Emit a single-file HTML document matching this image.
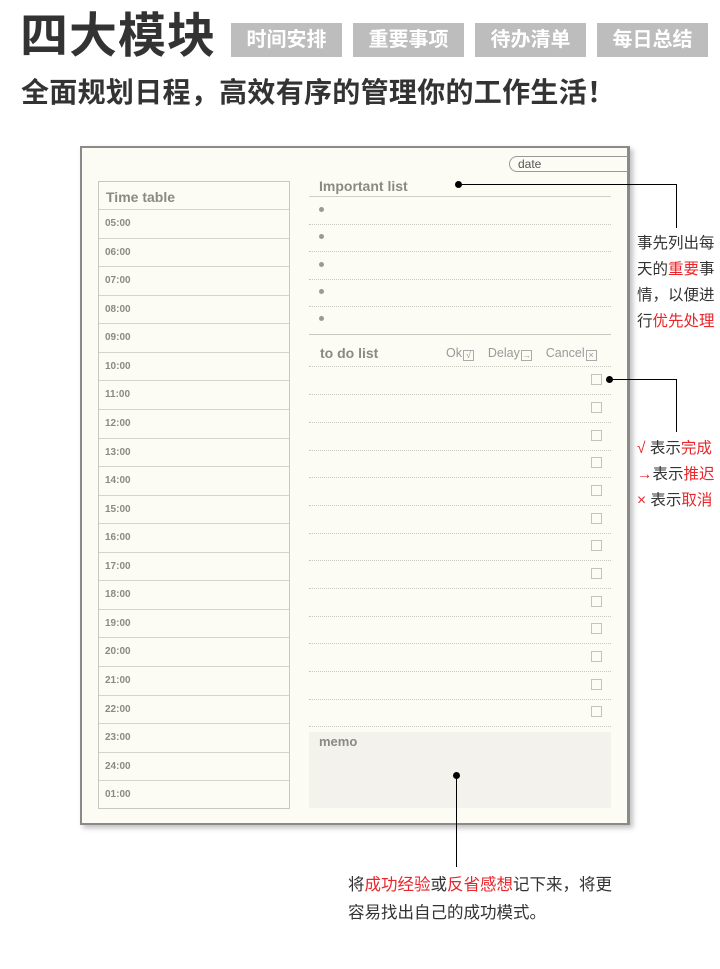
<!DOCTYPE html>
<html><head><meta charset="utf-8"><style>
*{margin:0;padding:0;box-sizing:border-box}
body{width:720px;height:969px;background:#fff;position:relative;overflow:hidden;font-family:"Liberation Sans","Noto Sans CJK SC",sans-serif}
.a{position:absolute}
.tag{position:absolute;top:23px;height:34px;width:111px;background:#bdbdbd;color:#fff;font-weight:bold;font-size:20px;line-height:34px;text-align:center}
.card{left:80px;top:146px;width:550px;height:679px;background:#fcfcf5;border:2px solid #8a8a8a;border-right:3px solid #8a8a8a;box-shadow:3px 3px 5px rgba(0,0,0,.25)}
.tt{left:98px;top:181px;width:192px;height:628px;border:1px solid #c8c8c0}
.row{height:28.57px;border-top:1px solid #d4d4cc;font-size:10px;color:#8a8a80;font-weight:bold;padding-left:6px;line-height:28px}
.g{color:#8a8a82;font-weight:bold}
.dl{position:absolute;left:309px;width:302px;border-top:1px dotted #c8c8c0}
.bul{position:absolute;left:319px;width:5px;height:5px;border-radius:50%;background:#999}
.cb{position:absolute;left:591px;width:11px;height:11px;border:1px solid #c4c4bc;background:#fcfcf5}
.ln{position:absolute;background:#000}
.dot{position:absolute;width:7px;height:7px;border-radius:50%;background:#000}
.ann{position:absolute;font-size:15.5px;color:#333;line-height:26px}
.r{color:#e8262b}
.bx{display:inline-block;width:11px;height:11px;border:1px solid #aaa;font-size:9px;line-height:9px;text-align:center;vertical-align:-1px;margin-left:1px}
</style></head><body>
<div class="a" style="left:20px;top:6px;font-size:48px;font-weight:bold;color:#333;line-height:62px;letter-spacing:1px">四大模块</div>
<div class="tag" style="left:231px">时间安排</div>
<div class="tag" style="left:353px">重要事项</div>
<div class="tag" style="left:475px">待办清单</div>
<div class="tag" style="left:597px">每日总结</div>
<div class="a" style="left:21px;top:75px;font-size:28px;font-weight:bold;color:#333;line-height:36px;letter-spacing:0.3px">全面规划日程，高效有序的管理你的工作生活！</div>

<div class="a card"></div>
<div class="a" style="left:509px;top:156px;width:119px;height:16px;border:1px solid #999;border-right:none;border-radius:8px 0 0 8px;font-size:12px;color:#555;padding-left:8px;line-height:14px">date</div>

<div class="a tt">
<div class="g" style="height:27px;font-size:14px;padding-left:7px;line-height:30px">Time table</div>
<div class="row">05:00</div><div class="row">06:00</div><div class="row">07:00</div><div class="row">08:00</div><div class="row">09:00</div><div class="row">10:00</div><div class="row">11:00</div><div class="row">12:00</div><div class="row">13:00</div><div class="row">14:00</div><div class="row">15:00</div><div class="row">16:00</div><div class="row">17:00</div><div class="row">18:00</div><div class="row">19:00</div><div class="row">20:00</div><div class="row">21:00</div><div class="row">22:00</div><div class="row">23:00</div><div class="row">24:00</div><div class="row">01:00</div>
</div>

<div class="a g" style="left:319px;top:178px;font-size:14px">Important list</div>
<div class="dl" style="top:196px;border-top:1px solid #d0d0c8"></div>
<div class="bul" style="top:207px"></div><div class="dl" style="top:224px"></div>
<div class="bul" style="top:234px"></div><div class="dl" style="top:251px"></div>
<div class="bul" style="top:262px"></div><div class="dl" style="top:279px"></div>
<div class="bul" style="top:289px"></div><div class="dl" style="top:306px"></div>
<div class="bul" style="top:316px"></div>
<div class="dl" style="top:334px;border-top:1px solid #c8c8c0"></div>
<div class="a g" style="left:320px;top:345px;font-size:14px">to do list</div>
<div class="a" style="left:446px;top:346px;font-size:12.5px;color:#999;white-space:nowrap">Ok<span class="bx">√</span>&nbsp;&nbsp;&nbsp;&nbsp;Delay<span class="bx">→</span>&nbsp;&nbsp;&nbsp;&nbsp;Cancel<span class="bx">×</span></div>
<div class="dl" style="top:366px"></div>
<div class="cb" style="top:374px"></div><div class="dl" style="top:394px"></div>
<div class="cb" style="top:402px"></div><div class="dl" style="top:422px"></div>
<div class="cb" style="top:430px"></div><div class="dl" style="top:450px"></div>
<div class="cb" style="top:457px"></div><div class="dl" style="top:477px"></div>
<div class="cb" style="top:485px"></div><div class="dl" style="top:505px"></div>
<div class="cb" style="top:513px"></div><div class="dl" style="top:533px"></div>
<div class="cb" style="top:540px"></div><div class="dl" style="top:560px"></div>
<div class="cb" style="top:568px"></div><div class="dl" style="top:588px"></div>
<div class="cb" style="top:596px"></div><div class="dl" style="top:616px"></div>
<div class="cb" style="top:623px"></div><div class="dl" style="top:643px"></div>
<div class="cb" style="top:651px"></div><div class="dl" style="top:671px"></div>
<div class="cb" style="top:679px"></div><div class="dl" style="top:699px"></div>
<div class="cb" style="top:706px"></div><div class="dl" style="top:726px"></div>
<div class="a" style="left:309px;top:732px;width:302px;height:76px;background:#f3f2ed"></div>
<div class="a g" style="left:319px;top:734px;font-size:13px">memo</div>

<div class="dot" style="left:455px;top:181px"></div>
<div class="ln" style="left:458px;top:184px;width:219px;height:1px"></div>
<div class="ln" style="left:676px;top:184px;width:1px;height:44px"></div>
<div class="ann" style="left:637px;top:231px">事先列出每<br>天的<span class="r">重要</span>事<br>情，以便进<br>行<span class="r">优先处理</span></div>

<div class="dot" style="left:606px;top:376px"></div>
<div class="ln" style="left:609px;top:379px;width:68px;height:1px"></div>
<div class="ln" style="left:676px;top:379px;width:1px;height:53px"></div>
<div class="ann" style="left:637px;top:436px"><span class="r">√</span>&nbsp;表示<span class="r">完成</span><br><span class="r">→</span>表示<span class="r">推迟</span><br><span class="r">×</span>&nbsp;表示<span class="r">取消</span></div>

<div class="dot" style="left:453px;top:772px"></div>
<div class="ln" style="left:456px;top:775px;width:1px;height:92px"></div>
<div class="ann" style="left:348px;top:871px;line-height:28px;font-size:16.5px">将<span class="r">成功经验</span>或<span class="r">反省感想</span>记下来，将更<br>容易找出自己的成功模式。</div>
</body></html>
